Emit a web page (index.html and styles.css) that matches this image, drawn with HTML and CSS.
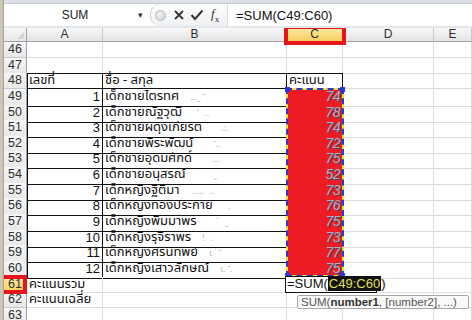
FILE: index.html
```html
<!DOCTYPE html>
<html lang="th">
<head>
    <meta charset="UTF-8">
    <title>SUM</title>
    <link rel="stylesheet" href="styles.css">
</head>
<body>
    <div class="window">
        <div class="edge"></div>
        <div class="app">
            <div class="topstrip"></div>

            <div class="formula-bar">
                <div class="name-box">
                    <span class="name">SUM</span>
                    <span class="drop">&#9662;</span>
                </div>
                <div class="fx-tools">
                    <span class="knob"></span>
                    <svg class="tool cancel" width="12" height="12" viewBox="0 0 12 12">
                        <path d="M2 2 L10 10 M10 2 L2 10" stroke="#333" stroke-width="1.8" fill="none"/>
                    </svg>
                    <svg class="tool enter" width="14" height="12" viewBox="0 0 14 12">
                        <path d="M1.5 6 L5 10 L12.5 1.5" stroke="#333" stroke-width="2" fill="none"/>
                    </svg>
                    <span class="fx"><i>f</i><sub>x</sub></span>
                </div>
                <div class="formula">=SUM(C49:C60)</div>
            </div>
            <div class="bar-gap"></div>

            <div class="sheet">
                <div class="row head">
                    <div class="rh corner"></div>
                    <div class="ch">A</div>
                    <div class="ch">B</div>
                    <div class="ch active">C</div>
                    <div class="ch">D</div>
                    <div class="ch">E</div>
                </div>

                <div class="row"><div class="rh">46</div><div class="c"></div><div class="c"></div><div class="c"></div><div class="c"></div><div class="c"></div></div>
                <div class="row"><div class="rh">47</div><div class="c tb"></div><div class="c tb"></div><div class="c tb"></div><div class="c"></div><div class="c"></div></div>

                <div class="row"><div class="rh">48</div><div class="c t first">เลขที่</div><div class="c t">ชื่อ - สกุล</div><div class="c t">คะแนน</div><div class="c"></div><div class="c"></div></div>
                <div class="row"><div class="rh">49</div><div class="c t first num">1</div><div class="c t">เด็กชายไตรทศ <span class="blur">..._ ˉ</span></div><div class="c t score">74</div><div class="c"></div><div class="c"></div></div>
                <div class="row"><div class="rh">50</div><div class="c t first num">2</div><div class="c t">เด็กชายณัฐวุฒิ <span class="blur">&nbsp; ˈ &nbsp; ..</span></div><div class="c t score">78</div><div class="c"></div><div class="c"></div></div>
                <div class="row"><div class="rh">51</div><div class="c t first num">3</div><div class="c t">เด็กชายผดุงเกียรติ <span class="blur">&nbsp; &nbsp; .:.</span></div><div class="c t score">74</div><div class="c"></div><div class="c"></div></div>
                <div class="row"><div class="rh">52</div><div class="c t first num">4</div><div class="c t">เด็กชายพีระพัฒน์ <span class="blur">&nbsp; &nbsp; ˉ..</span></div><div class="c t score">72</div><div class="c"></div><div class="c"></div></div>
                <div class="row"><div class="rh">53</div><div class="c t first num">5</div><div class="c t">เด็กชายอุดมศักดิ์ <span class="blur">&nbsp; &nbsp; ....</span></div><div class="c t score">75</div><div class="c"></div><div class="c"></div></div>
                <div class="row"><div class="rh">54</div><div class="c t first num">6</div><div class="c t">เด็กชายอนุสรณ์ <span class="blur">&nbsp; &nbsp; &nbsp; &nbsp; ˬ</span></div><div class="c t score">52</div><div class="c"></div><div class="c"></div></div>
                <div class="row"><div class="rh">55</div><div class="c t first num">7</div><div class="c t">เด็กหญิงฐิติมา <span class="blur">...... &nbsp; ..</span></div><div class="c t score">73</div><div class="c"></div><div class="c"></div></div>
                <div class="row"><div class="rh">56</div><div class="c t first num">8</div><div class="c t">เด็กหญิงทองประกาย <span class="blur">&nbsp; .</span></div><div class="c t score">76</div><div class="c"></div><div class="c"></div></div>
                <div class="row"><div class="rh">57</div><div class="c t first num">9</div><div class="c t">เด็กหญิงพิมมาพร <span class="blur">&nbsp; &nbsp; ˊ &nbsp; _</span></div><div class="c t score">75</div><div class="c"></div><div class="c"></div></div>
                <div class="row"><div class="rh">58</div><div class="c t first num">10</div><div class="c t">เด็กหญิงรุจิราพร <span class="blur">! &nbsp; .</span></div><div class="c t score">73</div><div class="c"></div><div class="c"></div></div>
                <div class="row"><div class="rh">59</div><div class="c t first num">11</div><div class="c t">เด็กหญิงศิรินทิพย์ <span class="blur">ι ˊ ˉ</span></div><div class="c t score">77</div><div class="c"></div><div class="c"></div></div>
                <div class="row"><div class="rh">60</div><div class="c t first num">12</div><div class="c t">เด็กหญิงเสาวลักษณ์ <span class="blur">ι. ˉ.</span></div><div class="c t score">75</div><div class="c"></div><div class="c"></div></div>

                <div class="row"><div class="rh active">61</div><div class="c">คะแนนรวม</div><div class="c"></div>
                    <div class="c editing">
                        <div class="edit-box">=SUM(<span class="ref">C49:C60</span>)</div>
                        <div class="hint">SUM(<b>number1</b>, [number2], ...)</div>
                    </div>
                    <div class="c"></div><div class="c"></div></div>
                <div class="row"><div class="rh">62</div><div class="c">คะแนนเฉลี่ย</div><div class="c"></div><div class="c"></div><div class="c"></div><div class="c"></div></div>
                <div class="row"><div class="rh">63</div><div class="c"></div><div class="c"></div><div class="c"></div><div class="c"></div><div class="c"></div></div>

                <div class="ants">
                    <span class="grip tl"></span>
                    <span class="grip tr"></span>
                    <span class="grip bl"></span>
                    <span class="grip br"></span>
                </div>
            </div>
        </div>
    </div>
</body>
</html>
```

FILE: styles.css
```css
* {
    margin: 0;
    padding: 0;
    box-sizing: border-box;
}

body {
    width: 472px;
    height: 320px;
    overflow: hidden;
    background: #fff;
    font-family: 'Liberation Sans', Arial, sans-serif;
}

.window {
    display: flex;
    height: 320px;
}

.edge {
    width: 4px;
    background: #cdc6b4;
    border-right: 1px solid #a9a393;
}

.app {
    flex: 1;
    display: flex;
    flex-direction: column;
    min-width: 0;
}

.topstrip {
    height: 4px;
    background: #dde1e7;
    border-bottom: 1px solid #c5cad3;
}

/* formula bar */
.formula-bar {
    height: 22px;
    display: flex;
    align-items: stretch;
    background: #fff;
}

.name-box {
    width: 146px;
    display: flex;
    align-items: center;
    background: #fff;
}

.name {
    flex: 1;
    text-align: center;
    font-size: 12px;
    color: #222;
    padding-left: 8px;
}

.drop {
    width: 12px;
    font-size: 9px;
    color: #333;
}

.fx-tools {
    width: 78px;
    display: flex;
    align-items: center;
    padding-left: 4px;
    background: linear-gradient(#fdfdfd, #eef0f3);
    border-left: 1px solid #c9ccd2;
    border-right: 1px solid #d8dbe0;
    border-radius: 10px 0 0 10px;
}

.knob {
    width: 11px;
    height: 11px;
    border-radius: 50%;
    background: radial-gradient(circle at 40% 35%, #f4f4f4, #c8cbd0);
    border: 1px solid #b8bcc3;
}

.tool {
    display: block;
}

.cancel {
    margin-left: 7px;
}

.enter {
    margin-left: 5px;
}

.fx {
    margin-left: 7px;
    font-family: 'Liberation Serif', serif;
    font-size: 13px;
    color: #333;
}

.fx sub {
    font-size: 9px;
}

.formula {
    flex: 1;
    display: flex;
    align-items: center;
    padding-left: 8px;
    font-size: 13px;
    color: #111;
}

.bar-gap {
    height: 2px;
    background: #e3e6ea;
}

/* sheet grid */
.sheet {
    position: relative;
    flex: 1;
    overflow: hidden;
}

.row {
    display: grid;
    grid-template-columns: 23px 76px 184px 56px 91px 38px;
    height: 15.65px;
}

.row.head {
    height: 14px;
}

.rh {
    background: linear-gradient(#f6f6f6, #e8e8e8);
    border-right: 1px solid #9fa3a8;
    border-bottom: 1px solid #c5c8cc;
    font-size: 12.5px;
    color: #303030;
    text-align: center;
    line-height: 15px;
}

.ch {
    background: linear-gradient(#f8f8f8, #e4e4e4);
    border-right: 1px solid #c5c8cc;
    border-bottom: 1px solid #9fa3a8;
    font-size: 12px;
    color: #303030;
    text-align: center;
    line-height: 13px;
}

.corner {
    border-bottom-color: #9fa3a8;
    position: relative;
}

.corner::after {
    content: "";
    position: absolute;
    right: 2px;
    bottom: 2px;
    border-left: 7px solid transparent;
    border-bottom: 7px solid #cfd2d6;
}

.ch.active {
    position: relative;
    background: linear-gradient(#fce9a3, #f6cf5c);
}

.ch.active::before {
    content: "";
    position: absolute;
    left: -3px;
    right: -4px;
    top: -3px;
    bottom: -4px;
    border: 4px solid #e8141c;
}

.rh.active {
    position: relative;
    background: linear-gradient(#fce9a3, #f6cf5c);
}

.rh.active::before {
    content: "";
    position: absolute;
    left: -4px;
    right: -1px;
    top: -2px;
    bottom: -2px;
    border: 4px solid #e8141c;
}

.c {
    border-right: 1px solid #dcdcdc;
    border-bottom: 1px solid #dcdcdc;
    font-family: Tahoma, 'Noto Sans Thai', 'Noto Sans', sans-serif;
    font-size: 13px;
    color: #111;
    line-height: 15px;
    padding: 0 2px;
    white-space: nowrap;
    overflow: visible;
}

.c.tb {
    border-bottom-color: #111;
}

.c.t {
    border-right-color: #111;
    border-bottom-color: #111;
}

.c.first {
    box-shadow: inset 1px 0 #111;
}

.num {
    text-align: right;
    font-family: 'Liberation Sans', Arial, sans-serif;
    font-size: 13px;
}

.blur {
    color: #b0b0b0;
    font-size: 8px;
    padding-left: 8px;
}

.score {
    background: #ed1c24;
    text-align: right;
    font-family: 'Liberation Sans', Arial, sans-serif;
    font-style: italic;
    font-size: 14px;
    color: #a9adc2;
    text-shadow: 1px 1px 0 #4a4a5a;
    letter-spacing: -0.5px;
}

/* copy range marquee over C49:C60 */
.ants {
    position: absolute;
    left: 282px;
    top: 60px;
    width: 58px;
    height: 189px;
    border: 2px solid #f0e02a;
}

.ants::before {
    content: "";
    position: absolute;
    inset: -2px;
    border: 2px dashed #2a36d6;
}

.grip {
    position: absolute;
    width: 5px;
    height: 5px;
    background: #2a36d6;
}

.tl { left: -3px; top: -3px; }
.tr { right: -3px; top: -3px; }
.bl { left: -3px; bottom: -3px; }
.br { right: -3px; bottom: -3px; }

/* cell in edit mode */
.editing {
    position: relative;
    overflow: visible;
}

.edit-box {
    position: absolute;
    left: -2px;
    top: -1px;
    width: 92px;
    height: 17px;
    background: #fff;
    border: 1px solid #111;
    font-family: 'Liberation Sans', Arial, sans-serif;
    font-size: 13px;
    line-height: 14px;
    padding-left: 1px;
    color: #111;
    z-index: 2;
}

.ref {
    background: #111;
    color: #e4e34a;
    padding: 0 1px;
}

.hint {
    position: absolute;
    left: 10px;
    top: 18px;
    width: 172px;
    height: 14px;
    background: #f9f9f9;
    border: 1px solid #a8a8a8;
    border-radius: 2px;
    font-family: 'Liberation Sans', Arial, sans-serif;
    font-size: 11.5px;
    line-height: 12px;
    color: #555;
    padding-left: 3px;
    white-space: nowrap;
    z-index: 2;
}

.hint b {
    color: #333;
}
```
